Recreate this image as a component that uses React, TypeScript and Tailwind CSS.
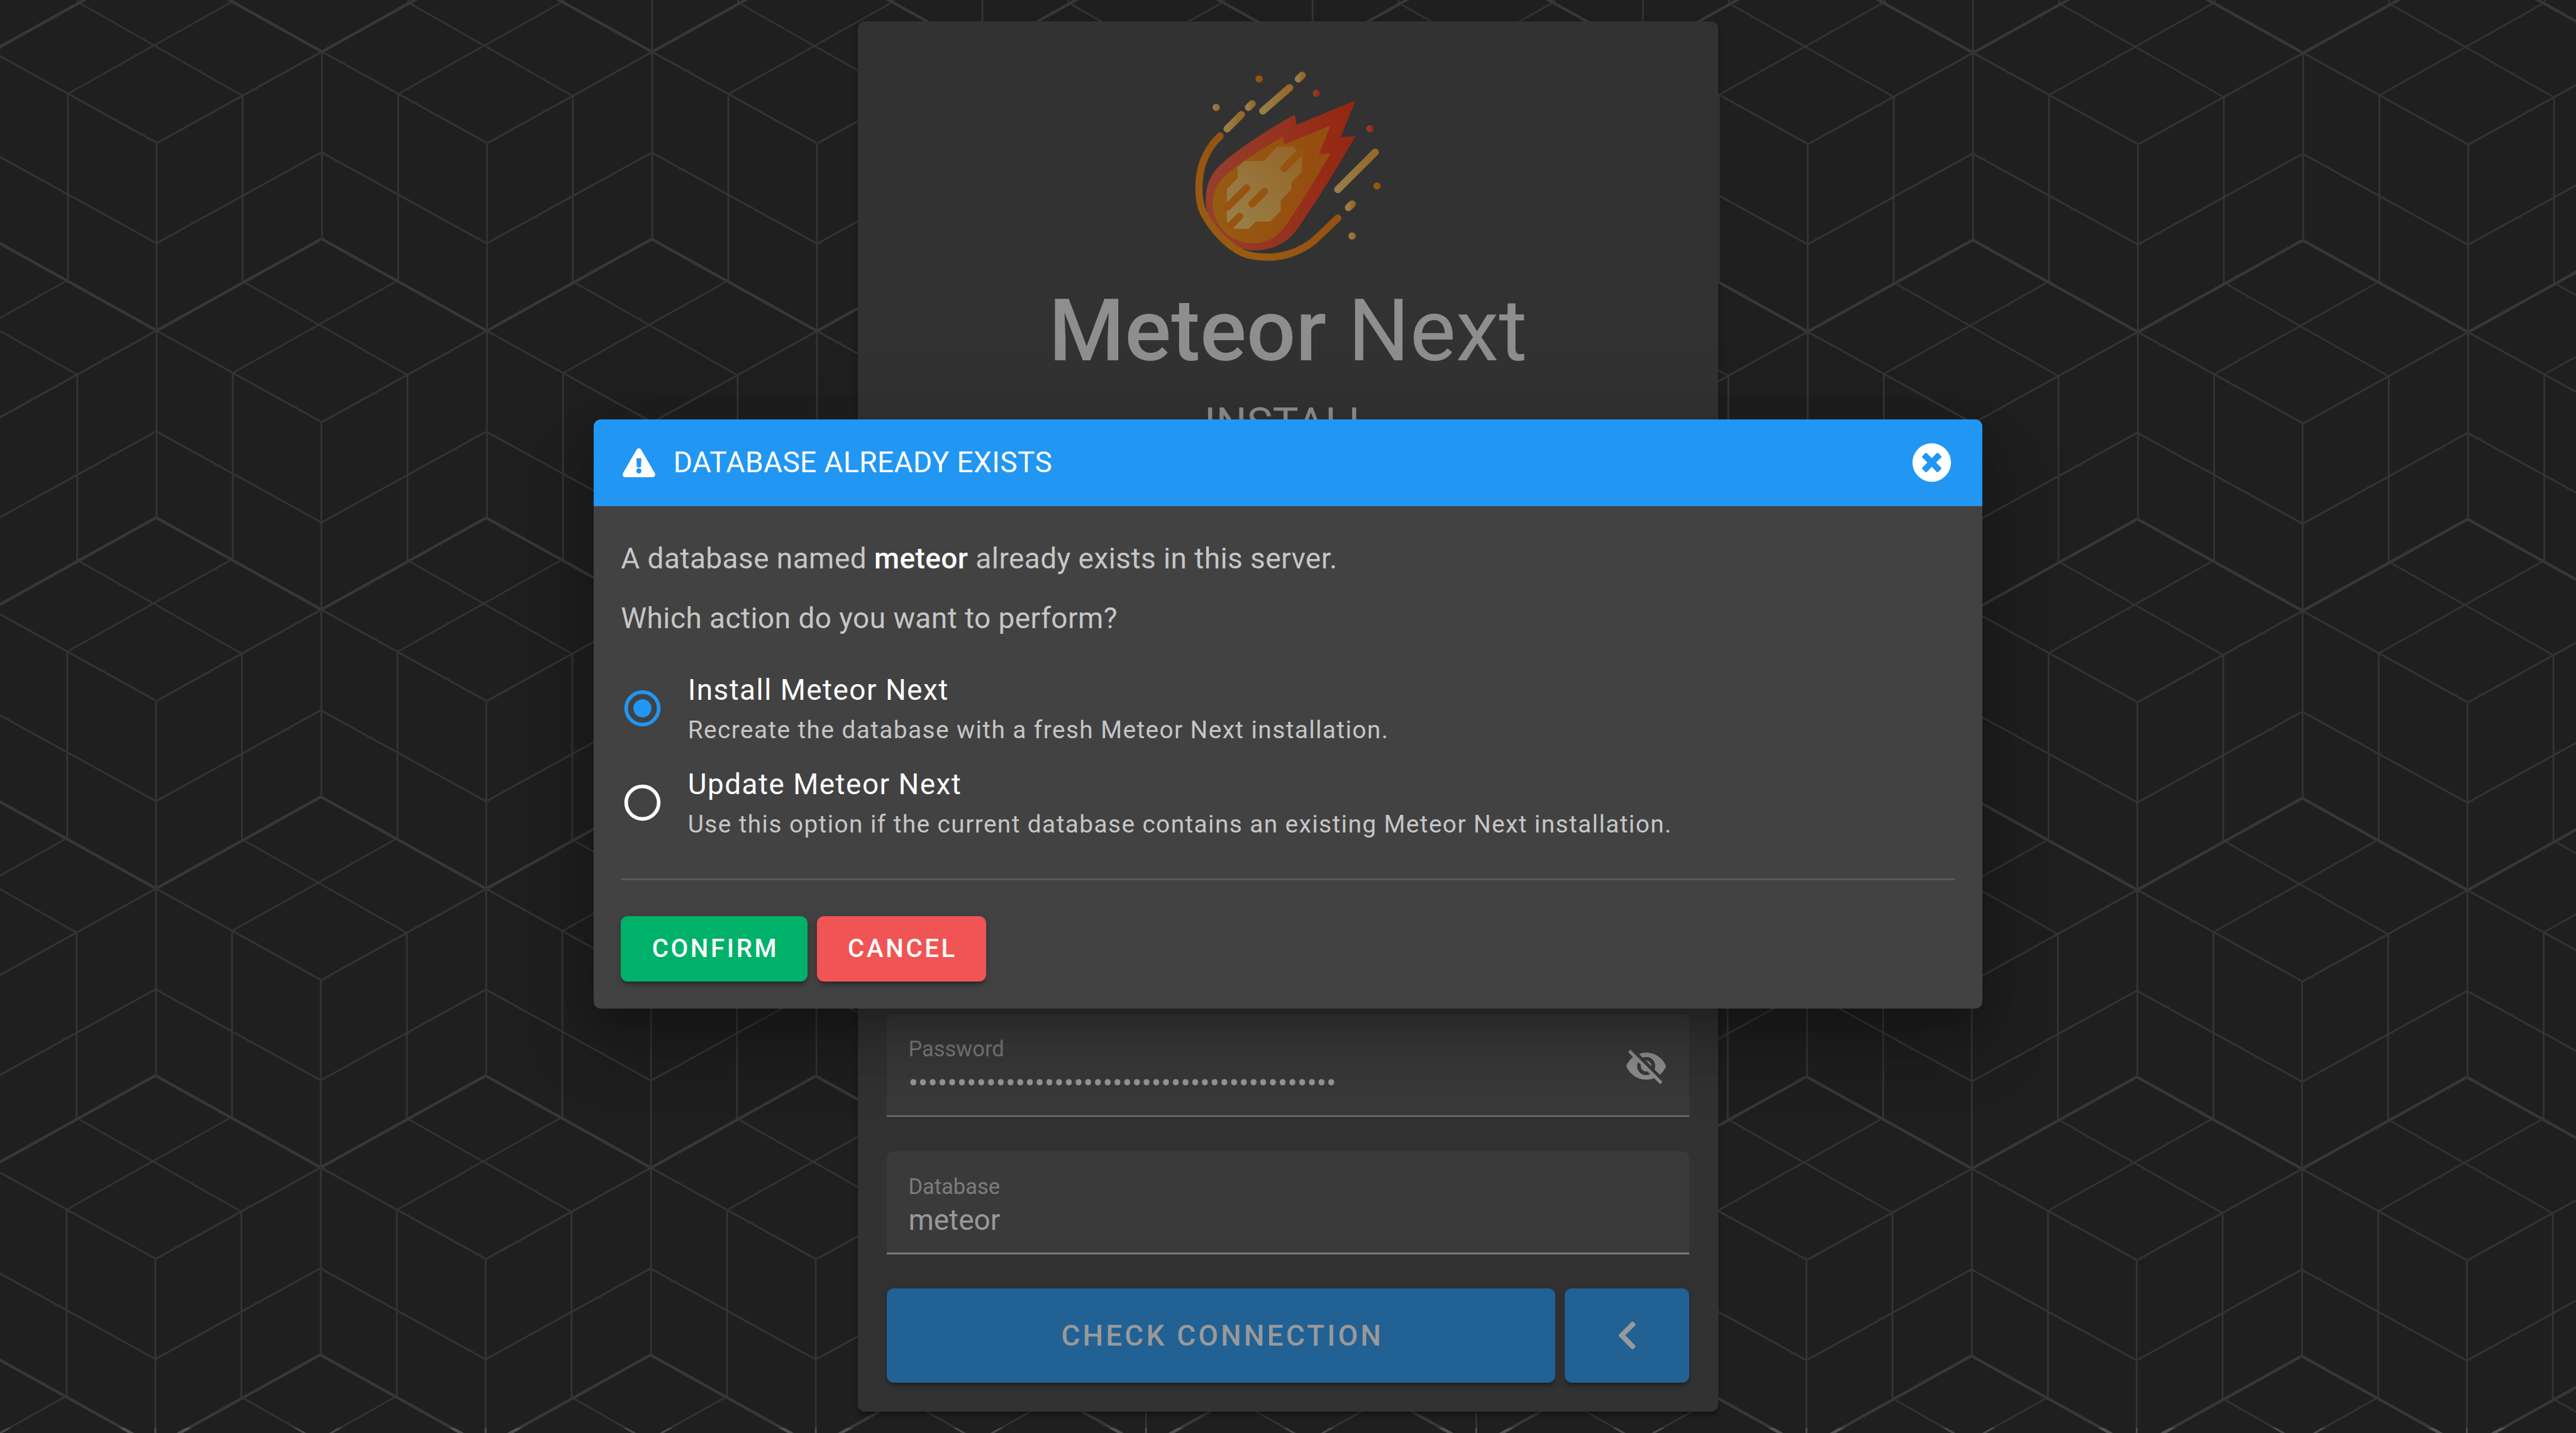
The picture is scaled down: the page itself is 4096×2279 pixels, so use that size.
import React from "react";
import { FaChevronLeft, FaExclamationTriangle, FaTimesCircle } from "react-icons/fa";

type Segment = { d: string; width: number; color: string };

// Line work of one cube, relative to the vertex where its three faces meet.
const CUBE: Segment[] = [
  { d: "M-364.7 -203L0 0L364.7 -203", width: 6.4, color: "#373737" },
  { d: "M-364.7 202L0 0L364.7 202", width: 4.6, color: "#333333" },
  { d: "M-200 -110L-562 93M-535.6 -107L-177 97", width: 4.2, color: "#323232" },
  { d: "M0 0V414.3M168.4 93V506M-175.7 98V509", width: 4, color: "#343434" },
  { d: "M0 223.5L364.7 424.5L729.5 223.5", width: 4.4, color: "#333333" },
];

type Node = { x: number; y: number; stem: boolean };

const NODES: Node[] = [];
for (let row = -1; row <= 5; row++) {
  for (let col = -1; col <= 8; col++) {
    NODES.push({
      x: 712.5 + 730.67 * col - (row % 2 !== 0 ? 365.2 : 0) - 0.7 * row,
      y: 114.3 + 617.4 * row + 0.5 * col,
      stem: row !== 0 || (col > 0 && col < 6),
    });
  }
}

function Cubes() {
  return (
    <g id="cubes" fill="none" strokeLinejoin="round">
      {NODES.map((n, i) => (
        <g key={i} transform={`translate(${n.x.toFixed(1)} ${n.y.toFixed(1)})`}>
          {CUBE.map((s) => (
            <path key={s.d} d={s.d} stroke={s.color} strokeWidth={s.width} />
          ))}
          {n.stem && <path d="M0 0V-414.3" stroke="#343434" strokeWidth={4} />}
        </g>
      ))}
    </g>
  );
}

function Backdrop() {
  return (
    <svg className="absolute inset-0 h-full w-full" viewBox="0 0 5700 3172" preserveAspectRatio="none">
      <rect width="5700" height="3172" fill="#1f1f1f" />
      <Cubes />
      <clipPath id="edge">
        <rect x="0" y="3160" width="5700" height="12" />
      </clipPath>
      <g clipPath="url(#edge)">
        <use href="#cubes" className="brightness-150" />
      </g>
    </svg>
  );
}

function MeteorLogo() {
  const gold = [
    [584, 378, 762, 223],
    [820, 165, 845, 141],
    [489, 354, 513, 330],
    [347, 497, 442, 402],
    [1082, 899, 1331, 651],
    [1153, 1019, 1177, 995],
  ];
  const craters = [
    [350, 1015, 477, 888],
    [513, 995, 596, 911],
    [372, 1136, 430, 1078],
    [726, 758, 838, 647],
  ];
  return (
    <svg className="h-[125px] w-[125px]" viewBox="0 0 1500 1500" strokeLinecap="round" fill="none">
      <defs>
        <linearGradient id="gold">
          <stop offset="0" stopColor="#987e48" />
          <stop offset="1" stopColor="#966829" />
        </linearGradient>
        <linearGradient id="rock" x1="0" y1="1" x2="1" y2="0">
          <stop offset="0" stopColor="#98814b" />
          <stop offset="1" stopColor="#956426" />
        </linearGradient>
        <linearGradient id="amber">
          <stop offset="0" stopColor="#965c12" />
          <stop offset="0.5" stopColor="#96520f" />
          <stop offset="1" stopColor="#954c10" />
        </linearGradient>
        <linearGradient id="ring" x1="0" y1="1" x2="1" y2="0">
          <stop offset="0" stopColor="#975e12" />
          <stop offset="1" stopColor="#954a10" />
        </linearGradient>
        <linearGradient id="red">
          <stop offset="0" stopColor="#963f2e" />
          <stop offset="1" stopColor="#952611" />
        </linearGradient>
      </defs>
      <path
        fill="url(#red)"
        d="M797 402L807 470L1200 308L1102 552L1200 545C1100 715 960 950 850 1107C820 1150 800 1182 775 1208C710 1270 625 1303 535 1303C350 1303 205 1150 205 965C205 870 240 795 300 738C400 645 600 510 797 402Z"
      />
      <path
        fill="url(#amber)"
        d="M718 548L726 600L1034 474L957 666L1034 659C930 840 810 1035 738 1135C680 1215 615 1256 515 1256C370 1256 252 1140 252 995C252 925 282 855 335 807C430 720 580 630 718 548Z"
      />
      <path
        fill="url(#rock)"
        d="M680 615H785L845 677V778L774 855V901L703 970V1042L632 1113H537L489 1161H395L346 1113V896L417 825V751L463 710H592Z"
      />
      {craters.map(([x1, y1, x2, y2]) => (
        <line key={x1} x1={x1} y1={y1} x2={x2} y2={y2} stroke="#965410" strokeWidth="48" />
      ))}
      <path
        stroke="url(#ring)"
        strokeWidth="48"
        d="M300 544C205 635 160 755 160 890C160 960 170 1010 191 1055C245 1160 350 1275 450 1320C505 1343 560 1348 622 1348C750 1348 870 1293 950 1215L1082 1089"
      />
      {gold.map(([x1, y1, x2, y2]) => (
        <line key={x1} x1={x1} y1={y1} x2={x2} y2={y2} stroke="url(#gold)" strokeWidth="48" />
      ))}
      <circle cx="275" cy="354" r="24" fill="url(#gold)" />
      <circle cx="1177" cy="1208" r="24" fill="url(#gold)" />
      <circle cx="560" cy="165" r="24" fill="url(#amber)" />
      <circle cx="1343" cy="876" r="24" fill="url(#amber)" />
      <circle cx="940" cy="260" r="24" fill="url(#red)" />
      <circle cx="1296" cy="496" r="24" fill="url(#red)" />
    </svg>
  );
}

function EyeOff() {
  return (
    <svg className="h-6 w-6" viewBox="0 0 24 24" fill="#909090">
      <path d="M11.83,9L15,12.16C15,12.11 15,12.05 15,12A3,3 0 0,0 12,9C11.94,9 11.89,9 11.83,9M7.53,9.8L9.08,11.35C9.03,11.56 9,11.77 9,12A3,3 0 0,0 12,15C12.22,15 12.44,14.97 12.65,14.92L14.2,16.47C13.53,16.8 12.79,17 12,17A5,5 0 0,1 7,12C7,11.21 7.2,10.47 7.53,9.8M2,4.27L4.28,6.55L4.73,7C3.08,8.3 1.78,10 1,12C2.73,16.39 7,19.5 12,19.5C13.55,19.5 15.03,19.2 16.38,18.66L16.81,19.08L19.73,22L21,20.73L3.27,3M12,7A5,5 0 0,1 17,12C17,12.64 16.87,13.26 16.64,13.82L19.57,16.75C21.07,15.5 22.27,13.86 23,12C21.27,7.61 17,4.5 12,4.5C10.6,4.5 9.26,4.75 8,5.2L10.17,7.35C10.74,7.13 11.35,7 12,7Z" />
    </svg>
  );
}

function Radio({ checked }: { checked?: boolean }) {
  return (
    <svg className={checked ? "h-6 w-6 text-[#2196f3]" : "h-6 w-6 text-white"} viewBox="0 0 24 24">
      <circle cx="12" cy="12" r="9" fill="none" stroke="currentColor" strokeWidth="2" />
      {checked && <circle cx="12" cy="12" r="5" fill="currentColor" />}
    </svg>
  );
}

function Field({ label, children, icon }: { label: string; children: React.ReactNode; icon?: React.ReactNode }) {
  return (
    <div className="h-[57px] overflow-hidden rounded-t-[4px] bg-[#3a3a3a]">
      <div className="flex h-14 justify-between pl-3 pr-3">
        <div className="flex flex-col pt-[9.7px]">
          <span className="text-xs leading-5 text-[#7c7c7c]">{label}</span>
          <span className="text-base leading-[17px] text-[#999999]">{children}</span>
        </div>
        {icon && <div className="pt-[17px]">{icon}</div>}
      </div>
      <div className="h-px bg-[#7a7a7a]" />
    </div>
  );
}

function Option({ title, hint, checked }: { title: string; hint: string; checked?: boolean }) {
  return (
    <div className="flex h-[42px] items-start">
      <div className="pt-2">
        <Radio checked={checked} />
      </div>
      <div className="ml-[13px] flex flex-col gap-[2px]">
        <span className="text-base leading-5 tracking-[0.5px] text-white">{title}</span>
        <span className="text-[13.5px] leading-5 tracking-[0.49px] text-[#c6c6c6]">{hint}</span>
      </div>
    </div>
  );
}

const raised =
  "shadow-[0_3px_1px_-2px_rgba(0,0,0,0.2),0_2px_2px_0_rgba(0,0,0,0.14),0_1px_5px_0_rgba(0,0,0,0.12)]";

export default function App() {
  return (
    <div className="relative flex h-[793px] w-[1425px] justify-center overflow-hidden bg-[#1f1f1f] pt-3 font-[Roboto,sans-serif] [zoom:2.8744]">
      <Backdrop />

      <main
        className={`relative flex h-[769px] w-[476px] flex-col justify-between rounded-[4px] bg-[#323232] px-4 pt-[18px] pb-4 ${raised}`}
      >
        <header className="flex flex-col items-center">
          <MeteorLogo />
          <h1 className="mt-[4.4px] text-[48px] leading-[48px] whitespace-nowrap text-[#8e8e8e]">
            <span className="font-medium">Meteor</span> Next
          </h1>
          <h2 className="mt-[11px] text-2xl leading-8 text-[#8e8e8e]">INSTALL</h2>
        </header>

        <form className="flex flex-col">
          <Field label="Password" icon={<EyeOff />}>
            <span className="tracking-[-0.02px]">{"•".repeat(44)}</span>
          </Field>
          <div className="mt-[19px]">
            <Field label="Database">meteor</Field>
          </div>
          <div className="mt-[19px] flex gap-[5px] font-medium text-[#999999]">
            <button
              type="button"
              className={`h-[52px] w-[370px] rounded-[4px] bg-[#216194] pl-[1.4px] text-base tracking-[1.43px] ${raised}`}
            >
              CHECK CONNECTION
            </button>
            <button
              type="button"
              className={`flex h-[52px] flex-1 items-center justify-center rounded-[4px] bg-[#216194] ${raised}`}
            >
              <FaChevronLeft className="h-[18px] w-[11.25px]" />
            </button>
          </div>
        </form>
      </main>

      <div className="absolute inset-0 flex items-start justify-center pt-[232px]">
        <section className="w-[768px] overflow-hidden rounded-[4px] bg-[#424242] shadow-[0_11px_15px_-7px_rgba(0,0,0,0.2),0_24px_38px_3px_rgba(0,0,0,0.14),0_9px_46px_8px_rgba(0,0,0,0.12)]">
          <div className="flex h-12 items-center bg-[#2196f3] pr-[17px] pl-4 text-white">
            <FaExclamationTriangle className="h-4 w-[18px]" />
            <span className="ml-[10px] text-base leading-6 tracking-[0.15px]">DATABASE ALREADY EXISTS</span>
            <FaTimesCircle className="ml-auto h-[22px] w-[22px]" />
          </div>
          <div className="flex flex-col px-[15px] pt-[17px] pb-[15px]">
            <p className="text-base leading-6 tracking-[0.15px] text-[#c6c6c6]">
              A database named <span className="font-medium text-white">meteor</span> already exists in this server.
            </p>
            <p className="mt-[9px] text-base leading-6 tracking-[0.15px] text-[#c6c6c6]">
              Which action do you want to perform?
            </p>
            <div className="mt-[18px] flex flex-col gap-[10px]">
              <Option checked title="Install Meteor Next" hint="Recreate the database with a fresh Meteor Next installation." />
              <Option
                title="Update Meteor Next"
                hint="Use this option if the current database contains an existing Meteor Next installation."
              />
            </div>
            <div className="mt-5 h-px bg-[#585858]" />
            <div className="mt-5 flex gap-[5px] text-sm font-medium tracking-[1.25px] text-white">
              <button type="button" className={`h-9 w-[103.3px] rounded-[4px] bg-[#00b16a] pl-[1.2px] ${raised}`}>
                CONFIRM
              </button>
              <button type="button" className={`h-9 w-[93.7px] rounded-[4px] bg-[#f05454] pl-[1.2px] ${raised}`}>
                CANCEL
              </button>
            </div>
          </div>
        </section>
      </div>
    </div>
  );
}
